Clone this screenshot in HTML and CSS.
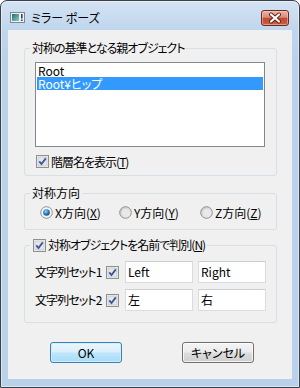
FILE: index.html
```html
<!DOCTYPE html>
<html lang="ja">
<head>
<meta charset="utf-8">
<title>ミラー ポーズ</title>
<link rel="stylesheet" href="styles.css">
</head>
<body>
<div class="window">
  <div class="titlebar">
    <svg class="appicon" width="15" height="11" viewBox="0 0 15 11">
      <defs>
        <linearGradient id="ig" x1="0" y1="0" x2="1" y2="1">
          <stop offset="0" stop-color="#1f6f7a"/>
          <stop offset="1" stop-color="#8fd0b8"/>
        </linearGradient>
      </defs>
      <rect x="0.5" y="0.5" width="14" height="10" fill="#eef2f6" stroke="#7d8791"/>
      <rect x="2" y="2" width="7" height="7" fill="url(#ig)"/>
      <rect x="11" y="2" width="1.6" height="4.5" fill="#3a4450"/>
      <rect x="11" y="7.5" width="1.6" height="1.5" fill="#3a4450"/>
    </svg>
    <span class="title">ミラー ポーズ</span>
    <div class="close">
      <svg width="26" height="14" viewBox="0 0 26 14">
        <path d="M9 3.5 L17 10.5 M17 3.5 L9 10.5" stroke="#5a1e15" stroke-width="4" stroke-linecap="round"/>
        <path d="M9 3.5 L17 10.5 M17 3.5 L9 10.5" stroke="#ffffff" stroke-width="2.2" stroke-linecap="round"/>
      </svg>
    </div>
  </div>
  <div class="client">
    <div class="group g1">
      <div class="legend jp">対称の基準となる親オブジェクト</div>
      <div class="listbox">
        <div class="item">Root</div>
        <div class="item sel">Root¥ヒップ</div>
      </div>
      <label class="check showname">
        <svg class="cb" width="13" height="13" viewBox="0 0 13 13"><rect x="0.5" y="0.5" width="12" height="12" fill="#fff" stroke="#8e8f8f"/><rect x="2" y="2" width="9" height="9" fill="#e4e6ea" stroke="#c4c8ce" stroke-width="1"/><path d="M3.3 6.4 L5.5 9 L9.8 3.4" fill="none" stroke="#3f5595" stroke-width="1.8"/></svg>
        <span class="jp">階層名を表示(<u>T</u>)</span>
      </label>
    </div>

    <div class="group g2">
      <div class="legend">対称方向</div>
      <div class="radios">
        <label class="radio rx">
          <svg width="13" height="13" viewBox="0 0 13 13"><defs><radialGradient id="rg" cx="0.4" cy="0.35" r="0.7"><stop offset="0" stop-color="#9fdcff"/><stop offset="0.5" stop-color="#2a85c6"/><stop offset="1" stop-color="#0d4a82"/></radialGradient></defs><circle cx="6.5" cy="6.5" r="5.8" fill="#f4f4f4" stroke="#8e8f8f"/><circle cx="6.5" cy="6.5" r="3.3" fill="url(#rg)"/></svg>
          <span>X方向(<u>X</u>)</span>
        </label>
        <label class="radio ry">
          <svg width="13" height="13" viewBox="0 0 13 13"><defs><linearGradient id="rb" x1="0" y1="0" x2="1" y2="1"><stop offset="0" stop-color="#c8c8c8"/><stop offset="1" stop-color="#f6f6f6"/></linearGradient></defs><circle cx="6.5" cy="6.5" r="5.8" fill="url(#rb)" stroke="#8e8f8f"/><circle cx="6.5" cy="6.5" r="3.5" fill="#e9e9e9"/></svg>
          <span>Y方向(<u>Y</u>)</span>
        </label>
        <label class="radio rz">
          <svg width="13" height="13" viewBox="0 0 13 13"><circle cx="6.5" cy="6.5" r="5.8" fill="url(#rb)" stroke="#8e8f8f"/><circle cx="6.5" cy="6.5" r="3.5" fill="#e9e9e9"/></svg>
          <span>Z方向(<u>Z</u>)</span>
        </label>
      </div>
    </div>

    <div class="group g3">
      <label class="legend check3">
        <svg class="cb" width="13" height="13" viewBox="0 0 13 13"><rect x="0.5" y="0.5" width="12" height="12" fill="#fff" stroke="#8e8f8f"/><rect x="2" y="2" width="9" height="9" fill="#e4e6ea" stroke="#c4c8ce" stroke-width="1"/><path d="M3.3 6.4 L5.5 9 L9.8 3.4" fill="none" stroke="#3f5595" stroke-width="1.8"/></svg>
        <span class="jp">対称オブジェクトを名前で判別(<u>N</u>)</span>
      </label>
      <div class="row r1">
        <span class="rowlabel">文字列セット1</span>
        <svg class="cb" width="13" height="13" viewBox="0 0 13 13"><rect x="0.5" y="0.5" width="12" height="12" fill="#fff" stroke="#8e8f8f"/><rect x="2" y="2" width="9" height="9" fill="#e4e6ea" stroke="#c4c8ce" stroke-width="1"/><path d="M3.3 6.4 L5.5 9 L9.8 3.4" fill="none" stroke="#3f5595" stroke-width="1.8"/></svg>
        <div class="tb">Left</div>
        <div class="tb">Right</div>
      </div>
      <div class="row r2">
        <span class="rowlabel">文字列セット2</span>
        <svg class="cb" width="13" height="13" viewBox="0 0 13 13"><rect x="0.5" y="0.5" width="12" height="12" fill="#fff" stroke="#8e8f8f"/><rect x="2" y="2" width="9" height="9" fill="#e4e6ea" stroke="#c4c8ce" stroke-width="1"/><path d="M3.3 6.4 L5.5 9 L9.8 3.4" fill="none" stroke="#3f5595" stroke-width="1.8"/></svg>
        <div class="tb">左</div>
        <div class="tb">右</div>
      </div>
    </div>

    <div class="buttons">
      <div class="btn default">OK</div>
      <div class="btn">キャンセル</div>
    </div>
  </div>
</div>
</body>
</html>
```

FILE: styles.css
```css
* { box-sizing: border-box; }

body {
  margin: 0;
  font: 12px/14px "Noto Sans CJK JP", "Noto Sans", sans-serif;
  font-feature-settings: "palt";
  color: #000;
  background: #ffffff;
}

u { text-decoration: underline; text-underline-offset: 1px; }

.jp { letter-spacing: -1px; }

.window {
  width: 300px;
  height: 388px;
  border: 1px solid #3c4148;
  border-radius: 7px 7px 0 0;
  background: linear-gradient(to bottom, #d4e3f3 0px, #c0d6ed 28px, #b9d1ea 60px, #b9d1ea 100%);
  box-shadow: inset 0 0 0 1px rgba(255, 255, 255, 0.45);
  display: flex;
  flex-direction: column;
  overflow: hidden;
}

.titlebar {
  height: 29px;
  padding: 4px 0 0 9px;
  display: flex;
  align-items: center;
  flex: none;
}

.appicon { flex: none; display: block; }

.title {
  margin-left: 6px;
  font-size: 12px;
  line-height: 14px;
  color: #000;
}

.close {
  margin-left: auto;
  margin-right: 10px;
  width: 28px;
  height: 16px;
  border: 1px solid #6d2b20;
  border-radius: 3px;
  background: linear-gradient(to bottom, #ecb2a4 0%, #d98b77 45%, #c4472f 52%, #cc5f45 100%);
  box-shadow: inset 0 0 0 1px rgba(255, 220, 210, 0.45);
  display: flex;
  align-items: center;
  justify-content: center;
}

.close svg { display: block; }

.client {
  margin: 0 7px;
  height: 349px;
  flex: none;
  background: #f0f0f0;
  padding: 18px 15px 0 16px;
}

.group {
  border: 1px solid #d5dfe5;
  border-radius: 3px;
}

.legend {
  display: flex;
  align-items: center;
  width: max-content;
  height: 14px;
  margin: -8px 0 0 5px;
  padding: 0 2px;
  background: #f0f0f0;
  line-height: 14px;
  white-space: nowrap;
}

.g1 { padding-bottom: 7px; }

.listbox {
  margin: 7px 0 0 10px;
  width: 230px;
  height: 85px;
  border: 1px solid #828790;
  background: #fff;
  padding: 1px;
}

.item {
  height: 13px;
  line-height: 13px;
  padding-left: 1px;
  white-space: nowrap;
}

.item.sel {
  background: #3399ff;
  color: #fff;
}

.check {
  display: flex;
  align-items: center;
  gap: 2px;
}

.cb { display: block; flex: none; }

.showname {
  margin: 8px 0 0 11px;
  height: 13px;
}

.g2 {
  margin-top: 17px;
  padding-bottom: 10px;
}

.radios {
  display: flex;
  margin: 6px 0 0 15px;
  height: 13px;
}

.radio {
  display: flex;
  align-items: center;
  gap: 2px;
  white-space: nowrap;
}

.radio svg { display: block; flex: none; }

.rx { width: 79px; }
.ry { width: 81px; }

.g3 {
  margin-top: 15px;
  padding-bottom: 11px;
}

.check3 {
  padding-left: 3px;
  gap: 2px;
}

.row {
  display: flex;
  align-items: center;
  height: 22px;
  padding-left: 10px;
}

.r1 { margin-top: 9px; }
.r2 { margin-top: 6px; }

.rowlabel {
  width: 71px;
  white-space: nowrap;
  letter-spacing: -0.9px;
}

.tb {
  width: 68px;
  height: 22px;
  border: 1px solid #d9dde2;
  border-top-color: #c9ced4;
  background: #fff;
  padding-left: 2px;
  line-height: 20px;
  white-space: nowrap;
}

.cb + .tb { margin-left: 6px; }
.tb + .tb { margin-left: 5px; }

.buttons {
  display: flex;
  gap: 60px;
  margin-top: 19px;
  padding-left: 26px;
}

.btn {
  width: 72px;
  height: 21px;
  border: 1px solid #707070;
  border-radius: 3px;
  background: linear-gradient(to bottom, #f4f4f4 0%, #ececec 48%, #dddddd 52%, #cfcfcf 100%);
  box-shadow: inset 0 0 0 1px rgba(255, 255, 255, 0.75);
  display: flex;
  align-items: center;
  justify-content: center;
  line-height: 14px;
}

.btn.default {
  border-color: #3c7fb1;
  background: linear-gradient(to bottom, #eaf6fd 0%, #d9f0fc 48%, #bee6fd 52%, #a9dbf6 100%);
  box-shadow: inset 0 0 0 1px rgba(210, 240, 255, 0.9);
}
```
